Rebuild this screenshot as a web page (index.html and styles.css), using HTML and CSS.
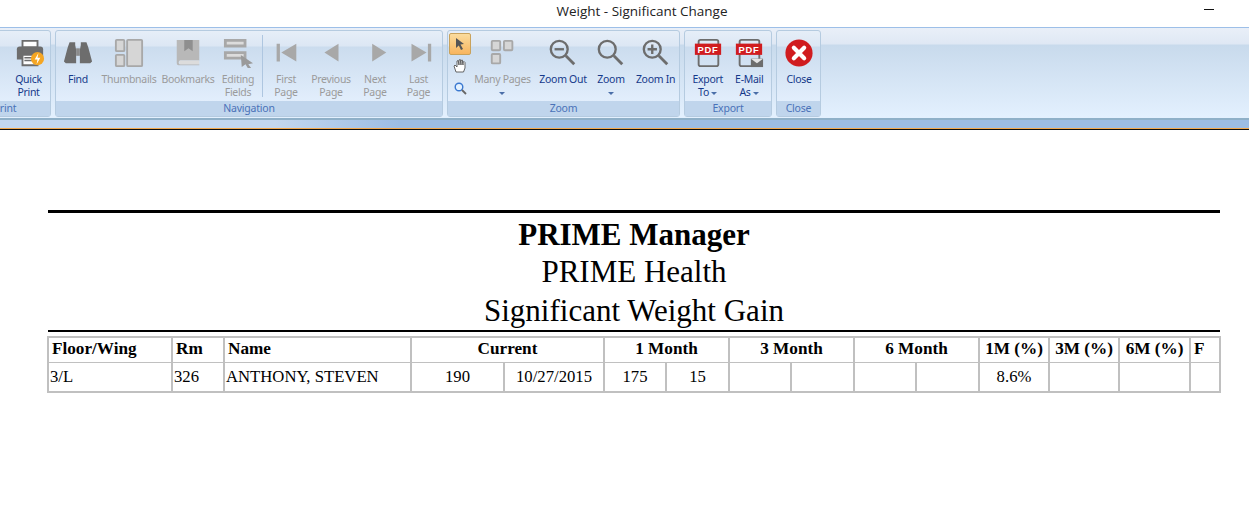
FILE: index.html
```html
<!DOCTYPE html>
<html lang="en">
<head>
    <meta charset="UTF-8">
    <meta name="viewport" content="width=device-width, initial-scale=1.0">
    <title>Weight - Significant Change</title>
    <link rel="stylesheet" href="styles.css">
</head>
<body>
    <div class="titlebar">
        <span>Weight - Significant Change</span>
        <span class="minimize"></span>
    </div>

    <div class="ribbon">
        <div class="group group-print">
            <div class="items">
                <div class="item w-print">
                    <svg class="icon icon-print" viewBox="0 0 32 32"><path d="M8 3h16v7H8z" fill="#fff" stroke="#6d6d6d" stroke-width="2"/><path d="M5 9h22a3 3 0 0 1 3 3v11H2V12a3 3 0 0 1 3-3z" fill="#6d6d6d"/><path d="M8 18h16v11H8z" fill="#fff" stroke="#6d6d6d" stroke-width="2"/><path d="M10 21h10M10 24h10" stroke="#6d6d6d" stroke-width="1.500"/><circle cx="24" cy="22" r="7" fill="#f5a623"/><path d="M25 16l-4 7h3l-1 5 4-7h-3z" fill="#fff"/></svg>
                    <span class="label on">Quick<br>Print</span>
                </div>
            </div>
            <div class="group-name">Print</div>
        </div>

        <div class="group">
            <div class="items">
                <div class="item w-find">
                    <svg class="icon" viewBox="0 0 32 32"><path d="M7 4.500h6v3l1 5V27H3l-2-2 4-15z" fill="#6d6d6d"/><path d="M25 4.500h-6v3l-1 5V27h11l2-2-4-15z" fill="#6d6d6d"/><path d="M14 11h4v8h-4z" fill="#8c8c8c"/></svg>
                    <span class="label on">Find</span>
                </div>
                <div class="item w-thumbs">
                    <svg class="icon" viewBox="0 0 32 32"><g fill="#d6d6d6" stroke="#a8a8a8" stroke-width="2"><rect x="2" y="2" width="9" height="12" rx="1"/><rect x="2" y="18" width="9" height="12" rx="1"/><rect x="14" y="2" width="16" height="28" rx="1"/></g></svg>
                    <span class="label">Thumbnails</span>
                </div>
                <div class="item w-books">
                    <svg class="icon" viewBox="0 0 32 32"><path d="M4 2h24v22H8a2 2 0 0 0 0 4h20v1H6a2 2 0 0 1-2-2z" fill="#b8b8b8"/><path d="M12 2h9v12l-4.500-3-4.500 3z" fill="#8f8f8f"/><path d="M7 24h21v4H7z" fill="#dcdcdc"/></svg>
                    <span class="label">Bookmarks</span>
                </div>
                <div class="item w-edit">
                    <svg class="icon" viewBox="0 0 32 32"><path d="M1 1h24v9H1zM1 14h24v9H1z" fill="#a8a8a8"/><path d="M4 4h18v3H4zM4 17h18v3H4z" fill="#dcdcdc"/><path d="M19 18l13 9-5 1 3 4-3 1-3-5-4 3z" fill="#9a9a9a"/></svg>
                    <span class="label">Editing<br>Fields</span>
                </div>
                <div class="sep"></div>
                <div class="item w-first">
                    <svg class="icon" viewBox="0 0 32 32"><path d="M6 6h3.500v19H6zM27 6v19L11 15.500z" fill="#a8a8a8"/></svg>
                    <span class="label">First<br>Page</span>
                </div>
                <div class="item w-prev">
                    <svg class="icon" viewBox="0 0 32 32"><path d="M24 6v19L9 15.500z" fill="#a8a8a8"/></svg>
                    <span class="label">Previous<br>Page</span>
                </div>
                <div class="item w-next">
                    <svg class="icon" viewBox="0 0 32 32"><path d="M13 6v19l15-9.500z" fill="#a8a8a8"/></svg>
                    <span class="label">Next<br>Page</span>
                </div>
                <div class="item w-last">
                    <svg class="icon" viewBox="0 0 32 32"><path d="M25.500 6H29v19h-3.500zM8 6v19l16-9.500z" fill="#a8a8a8"/></svg>
                    <span class="label">Last<br>Page</span>
                </div>
            </div>
            <div class="group-name">Navigation</div>
        </div>

        <div class="group">
            <div class="items">
                <div class="tools">
                    <div class="tool active">
                        <svg viewBox="0 0 12 12" width="12" height="12"><path d="M2 0l8 6-3.500.6L9 11l-2 1-2.200-4.400L2 10z" fill="#555"/></svg>
                    </div>
                    <div class="tool">
                        <svg viewBox="0 0 14 14" width="14" height="14"><path d="M3 13L1 7l1-1 2 2V2l1.200-.5L6 6V1l1.300-.5L8 6V1.500L9.300 1 10 6V3l1.300-.3.700.8V9l-1.500 4z" fill="#fff" stroke="#555" stroke-width=".9"/></svg>
                    </div>
                    <div class="tool">
                        <svg viewBox="0 0 14 14" width="14" height="14"><circle cx="6" cy="6" r="3.800" fill="#e4f2ff" stroke="#3a78d0" stroke-width="1.400"/><path d="M9 9l4 4" stroke="#666" stroke-width="1.800"/></svg>
                    </div>
                </div>
                <div class="item w-many">
                    <svg class="icon" viewBox="0 0 32 32"><g fill="#d6d6d6" stroke="#a8a8a8" stroke-width="2"><rect x="4" y="3" width="9" height="10" rx="1"/><rect x="17" y="3" width="9" height="10" rx="1"/><rect x="4" y="17" width="9" height="10" rx="1"/></g></svg>
                    <span class="label">Many Pages<br><i class="caret"></i></span>
                </div>
                <div class="item w-zoomout">
                    <svg class="icon" viewBox="0 0 32 32"><circle cx="12" cy="12" r="9" fill="none" stroke="#6d6d6d" stroke-width="2.500"/><path d="M7 12h10" stroke="#6d6d6d" stroke-width="2.500"/><path d="M19 19l9 9" stroke="#6d6d6d" stroke-width="3"/></svg>
                    <span class="label on">Zoom Out</span>
                </div>
                <div class="item w-zoom">
                    <svg class="icon" viewBox="0 0 32 32"><circle cx="12" cy="12" r="9" fill="none" stroke="#6d6d6d" stroke-width="2.500"/><path d="M19 19l9 9" stroke="#6d6d6d" stroke-width="3"/></svg>
                    <span class="label on">Zoom<br><i class="caret"></i></span>
                </div>
                <div class="item w-zoomin">
                    <svg class="icon" viewBox="0 0 32 32"><circle cx="12" cy="12" r="9" fill="none" stroke="#6d6d6d" stroke-width="2.500"/><path d="M7 12h10M12 7v10" stroke="#6d6d6d" stroke-width="2.500"/><path d="M19 19l9 9" stroke="#6d6d6d" stroke-width="3"/></svg>
                    <span class="label on">Zoom In</span>
                </div>
            </div>
            <div class="group-name">Zoom</div>
        </div>

        <div class="group">
            <div class="items">
                <div class="item w-export">
                    <svg class="icon" viewBox="0 0 32 32"><rect x="6" y="2" width="21" height="28" rx="2" fill="none" stroke="#6d6d6d" stroke-width="2"/><rect x="2" y="6" width="28" height="12" fill="#d01c1f"/><text x="16" y="15.500" class="pdf">PDF</text></svg>
                    <span class="label on">Export<br>To <i class="caret"></i></span>
                </div>
                <div class="item w-export">
                    <svg class="icon" viewBox="0 0 32 32"><rect x="6" y="2" width="21" height="28" rx="2" fill="none" stroke="#6d6d6d" stroke-width="2"/><rect x="2" y="6" width="28" height="12" fill="#d01c1f"/><text x="16" y="15.500" class="pdf">PDF</text><path d="M18 22h13v9H18z" fill="#6d6d6d"/><path d="M18 22l6.500 5 6.500-5" fill="#e4e4e4"/></svg>
                    <span class="label on">E-Mail<br>As <i class="caret"></i></span>
                </div>
            </div>
            <div class="group-name">Export</div>
        </div>

        <div class="group">
            <div class="items">
                <div class="item w-close">
                    <svg class="icon" viewBox="0 0 32 32"><circle cx="16" cy="16" r="14.500" fill="#d01c1f"/><path d="M10.500 10.500l11 11M21.500 10.500l-11 11" stroke="#fff" stroke-width="4.500" stroke-linecap="round"/></svg>
                    <span class="label on">Close</span>
                </div>
            </div>
            <div class="group-name">Close</div>
        </div>
    </div>
    <div class="ribbon-foot"></div>

    <div class="report">
        <div class="report-head">
            <div class="head-main">PRIME Manager</div>
            <div>PRIME Health</div>
            <div>Significant Weight Gain</div>
        </div>
        <table>
            <colgroup>
                <col class="c-floor"><col class="c-rm"><col class="c-name">
                <col class="c-cur"><col class="c-date">
                <col class="c-m"><col class="c-m2"><col class="c-m"><col class="c-m2"><col class="c-m"><col class="c-m2">
                <col class="c-pct"><col class="c-pct"><col class="c-pct6"><col class="c-f">
            </colgroup>
            <tr>
                <th class="left">Floor/Wing</th>
                <th class="left">Rm</th>
                <th class="left">Name</th>
                <th colspan="2">Current</th>
                <th colspan="2">1 Month</th>
                <th colspan="2">3 Month</th>
                <th colspan="2">6 Month</th>
                <th>1M (%)</th>
                <th>3M (%)</th>
                <th>6M (%)</th>
                <th class="left">F</th>
            </tr>
            <tr>
                <td class="left">3/L</td>
                <td class="left">326</td>
                <td class="left">ANTHONY, STEVEN</td>
                <td>190</td>
                <td>10/27/2015</td>
                <td>175</td>
                <td>15</td>
                <td></td>
                <td></td>
                <td></td>
                <td></td>
                <td>8.6%</td>
                <td></td>
                <td></td>
                <td></td>
            </tr>
        </table>
    </div>
</body>
</html>
```

FILE: styles.css
```css
body {
    margin: 0;
    background-color: #fff;
    overflow: hidden;
    font-family: "Noto Sans", sans-serif;
}

.titlebar {
    height: 27px;
    box-sizing: border-box;
    padding: 0 0 6px 35px;
    display: flex;
    align-items: center;
    justify-content: center;
    position: relative;
    font-family: "Open Sans", sans-serif;
    font-size: 13.500px;
    color: #222;
}
.minimize {
    position: absolute;
    left: 1204px;
    top: 9px;
    width: 10px;
    height: 1px;
    background-color: #111;
}

.ribbon {
    height: 88px;
    display: flex;
    gap: 4px;
    padding-top: 2px;
    border-top: 1px solid #9dbfe8;
    background: linear-gradient(#e9eff8, #dfe8f4 16px, #c8daec 17px, #e3f0fe 89px);
}
.group {
    height: 85px;
    display: flex;
    flex-direction: column;
    border: 1px solid #b5cbe0;
    border-radius: 3px;
    background: linear-gradient(#e6eef8, #dce7f4 15px, #cbdcee 16px, #e2eefc 70px);
}
.group-print {
    margin-left: -41px;
}
.items {
    height: 70px;
    display: flex;
    padding: 0 1px 0 2px;
}
.group-name {
    height: 15px;
    line-height: 14px;
    text-align: center;
    font-size: 10.500px;
    letter-spacing: -.2px;
    color: #4a72b8;
    background-color: #c0d5ec;
}

.item {
    display: flex;
    flex-direction: column;
    align-items: center;
    padding-top: 7px;
}
.icon {
    width: 30px;
    height: 30px;
    display: block;
    flex: none;
}
.icon-print {
    margin-left: 3px;
}
.label {
    margin-top: 5px;
    font-size: 10.500px;
    letter-spacing: -.3px;
    line-height: 13px;
    text-align: center;
    white-space: nowrap;
    color: #9b9b9b;
}
.label.on {
    color: #15398a;
}
.caret {
    display: inline-block;
    width: 0;
    height: 0;
    vertical-align: middle;
    border-left: 3px solid transparent;
    border-right: 3px solid transparent;
    border-top: 3px solid #4a6ea8;
}
.pdf {
    font-family: "Liberation Sans", sans-serif;
    font-size: 10px;
    font-weight: 700;
    letter-spacing: .8px;
    text-anchor: middle;
    fill: #fff;
}

.w-print { width: 41px; margin-left: 46px; }
.w-find { width: 40px; }
.w-thumbs { width: 62px; }
.w-books { width: 56px; }
.w-edit { width: 44px; }
.w-first { width: 44px; }
.w-prev { width: 46px; }
.w-next { width: 42px; }
.w-last { width: 45px; }
.w-many { width: 59px; }
.w-zoomout { width: 56px; margin-left: 3px; }
.w-zoom { width: 40px; }
.w-zoomin { width: 45px; margin-left: 2px; }
.w-export { width: 41.500px; }
.w-close { width: 40px; }

.sep {
    width: 1px;
    height: 62px;
    margin: 4px 1px 0 2px;
    background-color: #aec6e0;
}

.tools {
    width: 24px;
    margin-left: -1px;
    display: flex;
    flex-direction: column;
    padding-top: 2px;
}
.tool {
    width: 22px;
    height: 22px;
    display: flex;
    align-items: center;
    justify-content: center;
}
.tool.active {
    box-sizing: border-box;
    border: 1px solid #c9a25c;
    border-radius: 2px;
    background: linear-gradient(#fbdc9e, #f8b55f);
}

.ribbon-foot {
    height: 8px;
    border-top: 2px solid #8fb0c8;
    border-bottom: 1px solid #f5a94e;
    background: linear-gradient(90deg, #c4d7ef, #c4d7ef 22%, #9dbde4 32%);
    box-shadow: 0 1px 0 #111;
}

.report {
    width: 1172px;
    margin: 81px 0 0 48px;
    font-family: "Liberation Serif", serif;
    color: #000;
}
.report-head {
    border-top: 3px solid #000;
    border-bottom: 2px solid #000;
    text-align: center;
    font-size: 31px;
    line-height: 39px;
    height: 117px;
}
.head-main {
    font-weight: 700;
    margin: 2px 0 -2px;
}

table {
    width: 1172px;
    margin: 4px 0 0 -1px;
    table-layout: fixed;
    border-collapse: collapse;
    font-size: 16.700px;
    border: 2px solid #c0c0c0;
}
th, td {
    padding: 0;
    text-align: center;
    overflow: hidden;
    white-space: nowrap;
    border: 1px solid #c0c0c0;
    border-left-width: 2px;
}
th {
    height: 21px;
    padding-bottom: 3px;
    font-size: 17.200px;
}
td {
    height: 28px;
}
th.left {
    text-align: left;
    padding-left: 3px;
}
td.left {
    text-align: left;
    padding-left: 1px;
}

.c-floor { width: 124px; }
.c-rm { width: 52px; }
.c-name { width: 187px; }
.c-cur { width: 93px; }
.c-date { width: 100px; }
.c-m { width: 62px; }
.c-m2 { width: 63px; }
.c-pct { width: 70px; }
.c-pct6 { width: 71px; }
.c-f { width: 30px; }
```
